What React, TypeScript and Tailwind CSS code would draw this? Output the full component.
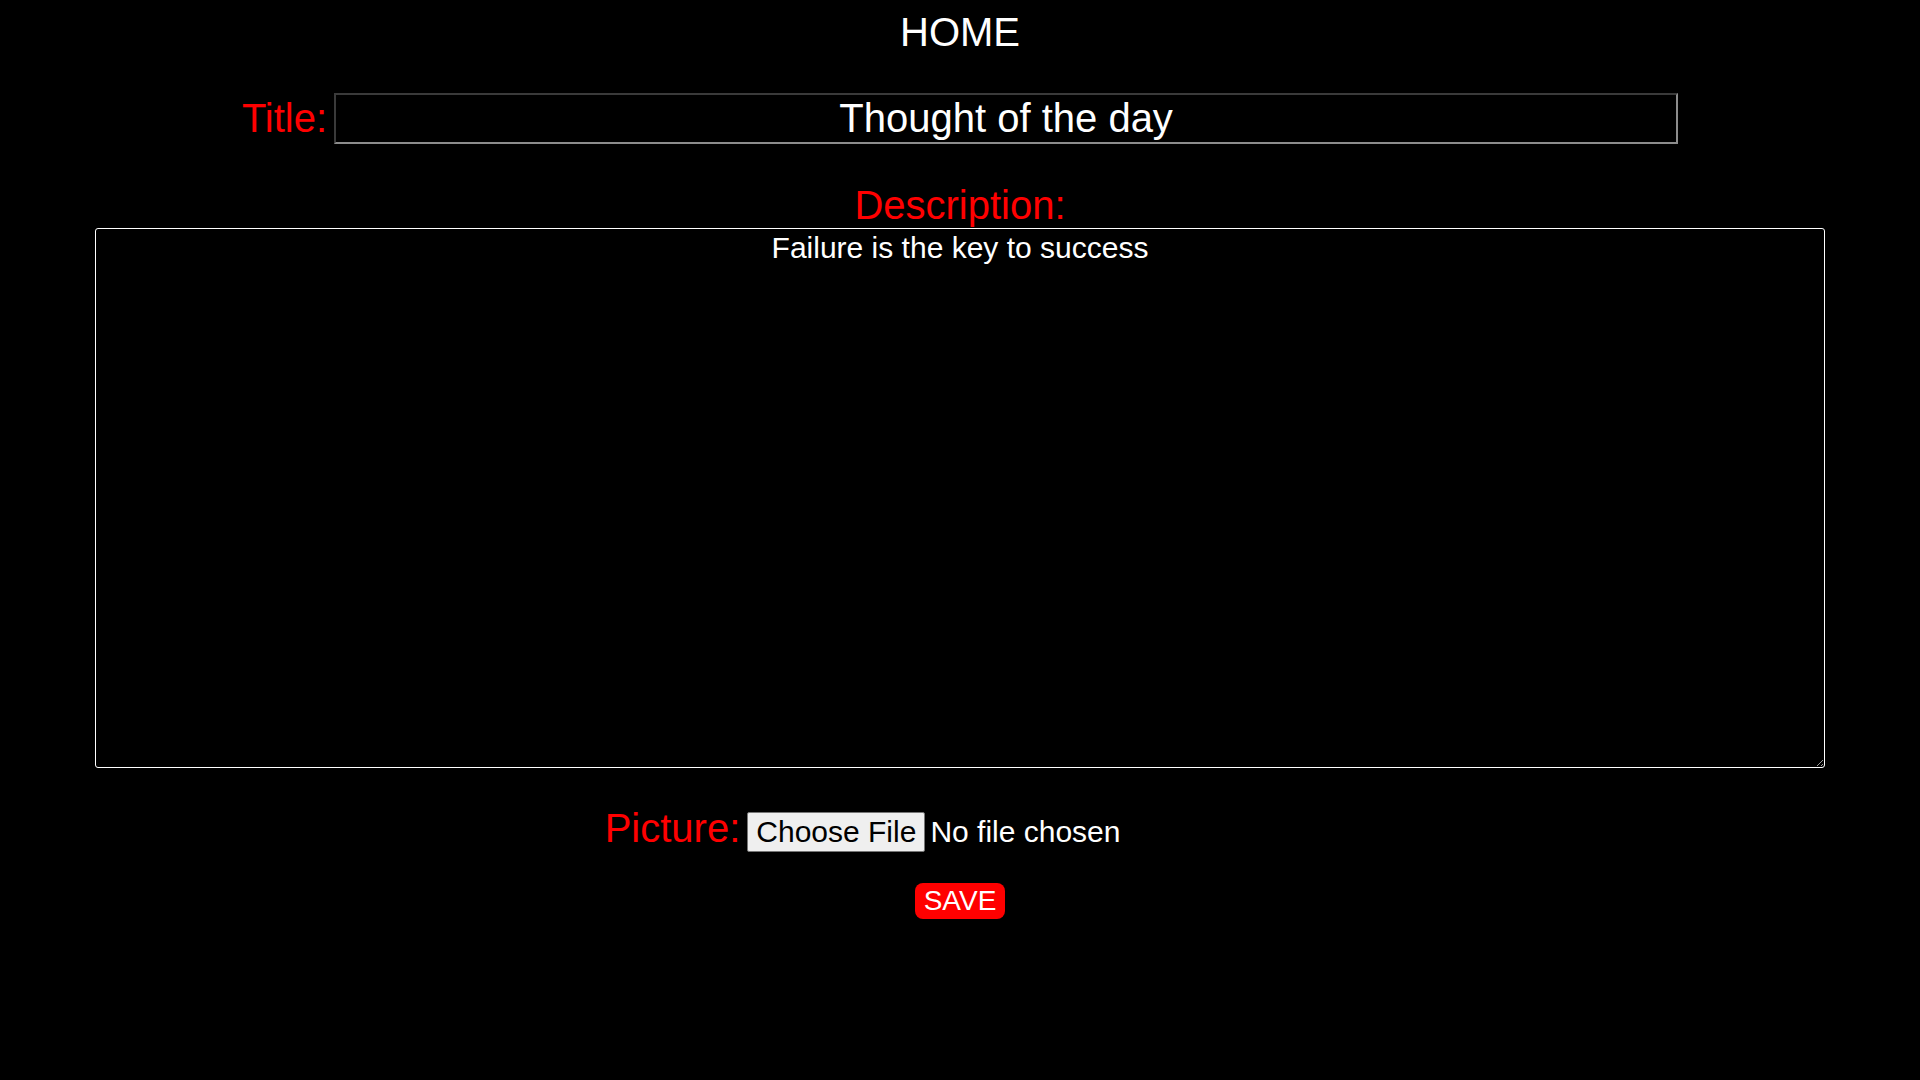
import { useState } from "react";

export default function App() {
    const [title, setTitle] = useState("Thought of the day");
    const [description, setDescription] = useState("Failure is the key to success");

    return (
        <div className="min-h-screen bg-black font-['Liberation_Sans',Arial,sans-serif] text-white">
            <h1 className="pt-[9px] text-center text-[40px] leading-[46px] font-normal">HOME</h1>

            {/* Title */}
            <div className="mt-[38px] flex items-baseline justify-center gap-[7px]">
                <label htmlFor="title" className="text-[40px] leading-[46px] text-[#ff0000]">
                    Title:
                </label>
                <input
                    id="title"
                    value={title}
                    onChange={(e) => setTitle(e.target.value)}
                    className="h-[51px] w-[1344px] border-2 border-t-[#3a3a3a] border-l-[#3a3a3a] border-b-[#8c8c8c] border-r-[#8c8c8c] bg-black px-[2px] text-center text-[40px] leading-[46px] text-white outline-none"
                />
            </div>

            {/* Description */}
            <label
                htmlFor="description"
                className="mt-[39px] block text-center text-[40px] leading-[45px] text-[#ff0000]"
            >
                Description:
            </label>
            <textarea
                id="description"
                value={description}
                onChange={(e) => setDescription(e.target.value)}
                className="mx-auto block h-[540px] w-[1730px] resize rounded-[3px] border border-white bg-black p-[2px] text-center text-[30px] leading-[34px] text-white outline-none"
            />

            {/* Picture */}
            <div className="mt-[37px] flex items-baseline justify-center gap-[7px]">
                <span className="text-[40px] leading-[46px] text-[#ff0000]">Picture:</span>
                <label className="flex w-[568px] cursor-pointer items-baseline gap-[5px]">
                    <input type="file" className="hidden" />
                    <span className="h-[40px] rounded-[2px] border border-[#767676] bg-[#efefef] px-[8px] text-[30px] leading-[38px] text-black">
                        Choose File
                    </span>
                    <span className="text-[30px] leading-[38px] text-white">No file chosen</span>
                </label>
            </div>

            <button className="mx-auto mt-[31px] block rounded-[8px] bg-[#ff0000] px-[9px] py-[2px] text-[28px] leading-[32px] text-white">
                SAVE
            </button>
        </div>
    );
}
